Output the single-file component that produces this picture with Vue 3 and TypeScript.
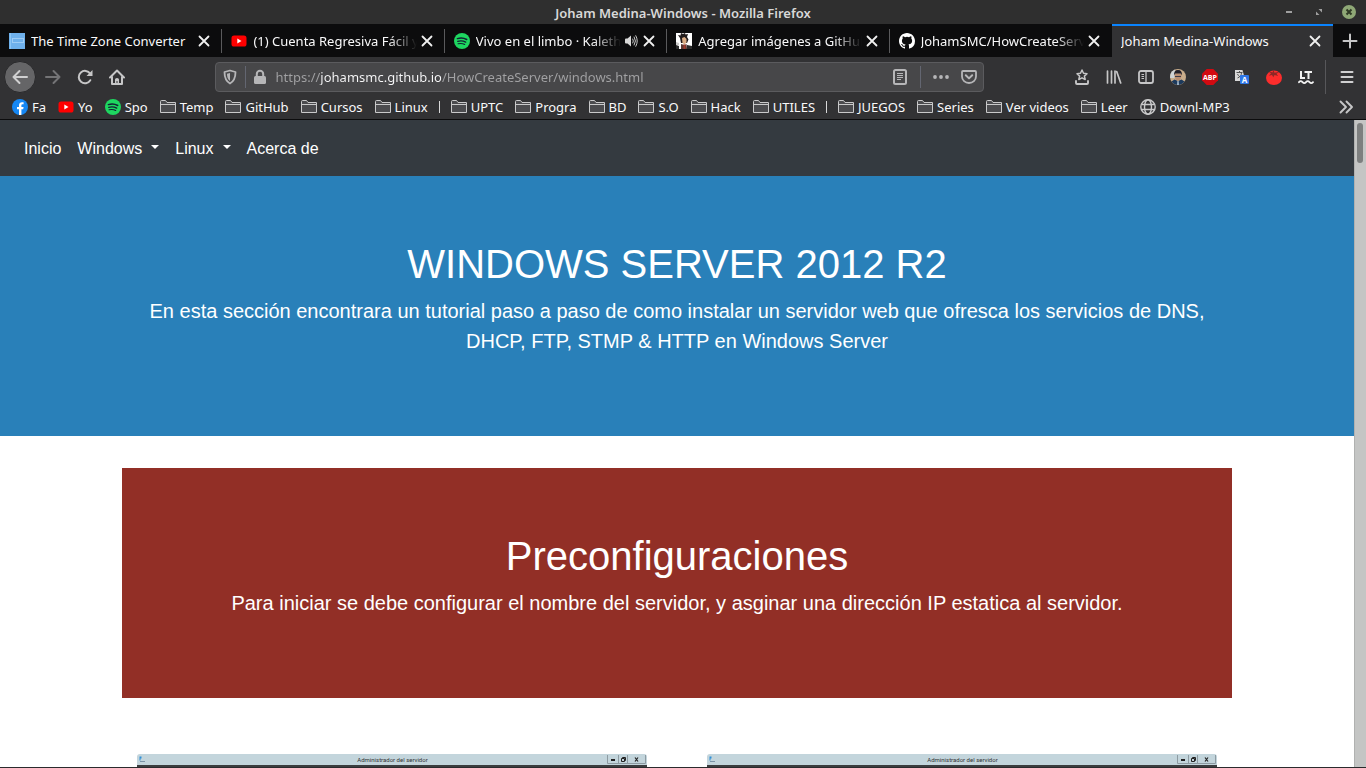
<script setup lang="ts">
import { ref } from 'vue'

interface Tab {
  title: string
  icon: string
  audio?: boolean
  active?: boolean
}

interface Bookmark {
  label: string
  icon: string
}

const tabs: Tab[] = [
  { title: 'The Time Zone Converter', icon: 'book' },
  { title: '(1) Cuenta Regresiva Fácil y', icon: 'youtube' },
  { title: 'Vivo en el limbo · Kaleth', icon: 'spotify', audio: true },
  { title: 'Agregar imágenes a GitHub', icon: 'anime' },
  { title: 'JohamSMC/HowCreateServer', icon: 'github' },
  { title: 'Joham Medina-Windows', icon: '', active: true },
]

const bookmarks: Bookmark[] = [
  { label: 'Fa', icon: 'facebook' },
  { label: 'Yo', icon: 'youtube' },
  { label: 'Spo', icon: 'spotify' },
  { label: 'Temp', icon: 'folder' },
  { label: 'GitHub', icon: 'folder' },
  { label: 'Cursos', icon: 'folder' },
  { label: 'Linux', icon: 'folder' },
  { label: '', icon: 'divider' },
  { label: 'UPTC', icon: 'folder' },
  { label: 'Progra', icon: 'folder' },
  { label: 'BD', icon: 'folder' },
  { label: 'S.O', icon: 'folder' },
  { label: 'Hack', icon: 'folder' },
  { label: 'UTILES', icon: 'folder' },
  { label: '', icon: 'divider' },
  { label: 'JUEGOS', icon: 'folder' },
  { label: 'Series', icon: 'folder' },
  { label: 'Ver videos', icon: 'folder' },
  { label: 'Leer', icon: 'folder' },
  { label: 'Downl-MP3', icon: 'globe' },
]

const extensions: { id: string; label: string }[] = [
  { id: 'star', label: 'Marcadores' },
  { id: 'library', label: 'Biblioteca' },
  { id: 'sidebar', label: 'Barra lateral' },
  { id: 'avatar', label: 'Cuenta' },
  { id: 'abp', label: 'Adblock Plus' },
  { id: 'translate', label: 'Traductor' },
  { id: 'tomato', label: 'Tomato Clock' },
  { id: 'lt', label: 'LanguageTool' },
]

const address = ref('https://johamsmc.github.io/HowCreateServer/windows.html')
const shots: number[] = [1, 2]
</script>

<template>
  <div class="window">
    <svg class="defs" width="0" height="0" aria-hidden="true">
      <symbol id="i-book" viewBox="0 0 16 16">
        <rect width="16" height="16" fill="#6fb1ec" />
        <path d="M1.500 0v16" stroke="#8cc6f6" />
        <rect x="3.500" y="5.500" width="11" height="4" fill="none" stroke="#9fcdf5" />
      </symbol>
      <symbol id="i-youtube" viewBox="0 0 16 16">
        <rect x="0.500" y="2.500" width="15" height="11" rx="2.600" fill="#f00" />
        <path d="M6.300 5.600v4.800L10.500 8z" fill="#fff" />
      </symbol>
      <symbol id="i-spotify" viewBox="0 0 16 16">
        <circle cx="8" cy="8" r="8" fill="#1ed760" />
        <g fill="none" stroke="#123" stroke-linecap="round">
          <path d="M3.400 5.600c3-.9 6.700-.6 9.300.9" stroke-width="1.500" />
          <path d="M3.700 8.300c2.700-.8 5.700-.5 8 .8" stroke-width="1.300" />
          <path d="M4.100 10.800c2.300-.6 4.700-.4 6.600.7" stroke-width="1.100" />
        </g>
      </symbol>
      <symbol id="i-anime" viewBox="0 0 16 16">
        <rect width="16" height="16" fill="#fff" />
        <path d="M0 12l3 1v3H0zM11 12l5 1v3h-5z" fill="#2b2b2b" />
        <path d="M0 9l3 1v2H0z" fill="#c9c9c9" />
        <path d="M4 5L2 2l2.500.5L5 0l2 1 2-1 .5 1.500L12 1l-1 3 1.500 2.500L11 10H5z" fill="#201a1a" />
        <path d="M6 5l2.500-1 2 2v3.500l-2 2-2-1.500z" fill="#dcae85" />
        <path d="M5 11l3.500 1 2-1 .5 5H5z" fill="#5b3a34" />
        <path d="M7.500 11.500h2V16h-2z" fill="#a33a2d" />
      </symbol>
      <symbol id="i-github" viewBox="0 0 16 16">
        <path fill="#fff" d="M8 0C3.580 0 0 3.580 0 8c0 3.540 2.290 6.530 5.470 7.590.4.070.55-.17.55-.38 0-.19-.01-.82-.01-1.490-2.010.37-2.530-.49-2.690-.94-.09-.23-.48-.94-.82-1.130-.28-.15-.68-.52-.01-.53.63-.01 1.080.58 1.230.82.72 1.210 1.870.87 2.330.66.07-.52.28-.87.51-1.070-1.780-.2-3.640-.89-3.640-3.950 0-.87.31-1.590.82-2.150-.08-.2-.36-1.020.08-2.120 0 0 .67-.21 2.200.82a7.600 7.600 0 0 1 4 0c1.530-1.040 2.200-.82 2.200-.82.44 1.100.16 1.920.08 2.120.51.56.82 1.270.82 2.150 0 3.070-1.870 3.750-3.650 3.950.29.25.54.73.54 1.480 0 1.070-.01 1.930-.01 2.200 0 .21.15.46.55.38A8 8 0 0 0 16 8c0-4.420-3.580-8-8-8z" />
      </symbol>
      <symbol id="i-facebook" viewBox="0 0 16 16">
        <circle cx="8" cy="8" r="8" fill="#1587f4" />
        <path d="M7 16v-5.700H5V8h2V6.300C7 4.200 8.200 3.200 10 3.200l1.600.1v2h-1C9.700 5.300 9.400 5.800 9.400 6.500V8h2.200l-.4 2.300H9.400V16z" fill="#fff" />
      </symbol>
      <symbol id="i-folder" viewBox="0 0 16 16">
        <path d="M.5 13.500v-11q0-1 1-1h4l1.500 2h8.500v10z" fill="#4b4b4e" stroke="#c9c9ca" />
        <path d="M.5 5.500h15" stroke="#c9c9ca" />
      </symbol>
      <symbol id="i-globe" viewBox="0 0 16 16">
        <g fill="none" stroke="#c9c9ca" stroke-width="1.400">
          <circle cx="8" cy="8" r="7.200" />
          <ellipse cx="8" cy="8" rx="3.500" ry="7.200" />
          <path d="M1.500 5.500h13M1.500 10.500h13" />
        </g>
      </symbol>
      <symbol id="i-back" viewBox="0 0 16 16">
        <path d="M15 8H1.500M7.500 2L1.500 8l6 6" fill="none" stroke="#d0d0d1" stroke-width="2" stroke-linecap="round" stroke-linejoin="round" />
      </symbol>
      <symbol id="i-forward" viewBox="0 0 16 16">
        <path d="M1 8h13.500M8.500 2l6 6-6 6" fill="none" stroke="#747476" stroke-width="2" stroke-linecap="round" stroke-linejoin="round" />
      </symbol>
      <symbol id="i-reload" viewBox="0 0 16 16">
        <path d="M13.200 4.700A6.200 6.200 0 1 0 13.300 11.200" fill="none" stroke="#c6c6c7" stroke-width="2" stroke-linecap="round" />
        <path d="M15.500 1v6h-6z" fill="#c6c6c7" />
      </symbol>
      <symbol id="i-home" viewBox="0 0 16 16">
        <path d="M1 8.500l7-7 7 7M3 7.500V15h10V7.500" fill="none" stroke="#c6c6c7" stroke-width="2" stroke-linecap="round" stroke-linejoin="round" />
        <path d="M6 15v-4.500q0-1.500 2-1.500t2 1.500V15H8.500v-3h-1v3z" fill="#c6c6c7" />
      </symbol>
      <symbol id="i-shield" viewBox="0 0 16 16">
        <path d="M8 1.500L13.500 3c0 5.500-1 9-5.500 11.500C3.500 12 2.500 8.500 2.500 3z" fill="none" stroke="#b6b6b8" stroke-width="1.800" stroke-linejoin="round" />
        <path d="M8 4v8C5.500 10 5 7.500 5 4.700z" fill="#b6b6b8" />
      </symbol>
      <symbol id="i-lock" viewBox="0 0 16 16">
        <path d="M4.800 7.500V5a3.200 3.200 0 0 1 6.400 0v2.500" fill="none" stroke="#b6b6b8" stroke-width="2" />
        <rect x="2" y="7" width="12" height="8" rx="1.500" fill="#b6b6b8" />
      </symbol>
      <symbol id="i-reader" viewBox="0 0 16 16">
        <rect x="2" y="1" width="12" height="14" rx="1.500" fill="none" stroke="#b6b6b8" stroke-width="2" />
        <path d="M5 4.500h6M5 6.500h6M5 8.500h6M5 10.500h4" stroke="#b6b6b8" />
      </symbol>
      <symbol id="i-dots" viewBox="0 0 16 16">
        <g fill="#b6b6b8">
          <circle cx="2" cy="8" r="1.900" />
          <circle cx="8" cy="8" r="1.900" />
          <circle cx="14" cy="8" r="1.900" />
        </g>
      </symbol>
      <symbol id="i-pocket" viewBox="0 0 16 16">
        <path d="M2 2h12q1 0 1 1v4.500a7 6.500 0 0 1-14 0V3q0-1 1-1z" fill="none" stroke="#b6b6b8" stroke-width="1.800" />
        <path d="M4.800 6.300L8 9.400l3.200-3.100" fill="none" stroke="#b6b6b8" stroke-width="2" stroke-linecap="round" stroke-linejoin="round" />
      </symbol>
      <symbol id="i-star" viewBox="0 0 16 16">
        <path d="M8 1l1.500 3.300 3.500.4-2.600 2.400.8 3.400L8 8.800l-3.200 1.700.8-3.400L3 4.700l3.500-.4z" fill="none" stroke="#c6c6c7" stroke-width="1.500" stroke-linejoin="round" />
        <path d="M2 12v2q0 1 1 1h10q1 0 1-1v-2" fill="none" stroke="#c6c6c7" stroke-width="1.900" stroke-linecap="round" />
      </symbol>
      <symbol id="i-library" viewBox="0 0 16 16">
        <path d="M1.500 2v12M5.500 2v12M9 2v12M10.700 2.500l4 11.500" fill="none" stroke="#c6c6c7" stroke-width="1.700" stroke-linecap="round" />
      </symbol>
      <symbol id="i-sidebar" viewBox="0 0 16 16">
        <rect x="1" y="2" width="14" height="12" rx="2" fill="none" stroke="#c6c6c7" stroke-width="1.800" />
        <path d="M8 2v12" stroke="#c6c6c7" stroke-width="1.300" />
        <path d="M3.500 5.500H6M3.500 7.500H6M3.500 9.500H6" stroke="#c6c6c7" />
      </symbol>
      <symbol id="i-avatar" viewBox="0 0 16 16">
        <circle cx="8" cy="8" r="8" fill="#c9ad8b" />
        <path d="M.3 6A8 8 0 0 1 5 .6L4.500 9 .1 9z" fill="#cfd3d6" />
        <path d="M1.500 12.500L4.500 10.500 8 12l3.500-1.500 3 2A8 8 0 0 1 1.500 12.500z" fill="#1d3a5c" />
        <path d="M4.800 4.500h6.400V8Q10.500 11.500 8 11.500T4.800 8z" fill="#b98e72" />
        <path d="M4.200 6.500Q3.500 1 8 1t3.800 5.500L10.800 4.500H5.200z" fill="#1f1e29" />
        <path d="M5 7h6v1H5z" fill="#3b3b48" />
        <path d="M7.300 12h1.400l.3 4H7z" fill="#9db2c6" />
      </symbol>
      <symbol id="i-tomato" viewBox="0 0 16 16">
        <ellipse cx="8" cy="8.800" rx="8" ry="7.200" fill="#fc2d2c" />
        <path d="M8.500 3.800L7.400.8l-.9.5.6 2L3 3l2 1.500L2.800 6.800 6 6l1.300 2.200L8.500 6l3.700 1-1.700-2.200L13.500 2.800z" fill="#8c2826" />
      </symbol>
      <symbol id="i-lt" viewBox="0 0 16 16">
        <path d="M3 2v7h4M6.500 3H14M10.500 3v7" fill="none" stroke="#f2f2f2" stroke-width="2" />
        <path d="M1 13.200q1.700-2 3.500 0t3.500 0 3.500 0 3.500 0" fill="none" stroke="#f2f2f2" stroke-width="1.800" stroke-linecap="round" />
      </symbol>
      <symbol id="i-menu" viewBox="0 0 16 16">
        <path d="M2.500 3h11M2.500 8h11M2.500 13h11" stroke="#d0d0d1" stroke-width="2" stroke-linecap="round" />
      </symbol>
      <symbol id="i-close" viewBox="0 0 16 16">
        <path d="M3.500 3.500l9 9M12.500 3.500l-9 9" stroke="#f0f0f0" stroke-width="1.800" stroke-linecap="round" />
      </symbol>
      <symbol id="i-plus" viewBox="0 0 16 16">
        <path d="M8 1.500v13M1.500 8h13" stroke="#c6c6c7" stroke-width="2" stroke-linecap="round" />
      </symbol>
      <symbol id="i-audio" viewBox="0 0 16 16">
        <path d="M2 6.500q0-1 1-1h1.500L8 2.500v11l-3.500-3H3q-1 0-1-1z" fill="#d8d8d8" />
        <path d="M9.800 6q1.200 2 0 4M11.200 4q2.600 4 0 8M12.800 2.700q3 5.300 0 10.600" fill="none" stroke="#c8c8c8" stroke-linecap="round" />
      </symbol>
      <symbol id="i-chevrons" viewBox="0 0 16 16">
        <path d="M2.500 2.500L8 8l-5.500 5.500M8.500 2.500L14 8l-5.500 5.500" fill="none" stroke="#c6c6c7" stroke-width="1.900" stroke-linecap="round" stroke-linejoin="round" />
      </symbol>
      <symbol id="i-minimize" viewBox="0 0 16 16">
        <path d="M5 8h6" stroke="#a0a0a0" stroke-width="2" />
      </symbol>
      <symbol id="i-maximize" viewBox="0 0 16 16">
        <path d="M7.500 5H11v3.500zM5 7.500V11h3.500z" fill="#a0a0a0" />
      </symbol>
      <symbol id="i-quit" viewBox="0 0 16 16">
        <circle cx="8" cy="8" r="7" fill="#8fa876" />
        <path d="M5.500 5.500l5 5M10.500 5.500l-5 5" stroke="#2f3a25" stroke-width="2" />
      </symbol>
    </svg>

    <header class="titlebar">
      <span class="window-title">Joham Medina-Windows - Mozilla Firefox</span>
      <div class="window-controls">
        <button type="button" aria-label="Minimizar"><svg class="icon"><use href="#i-minimize" /></svg></button>
        <button type="button" aria-label="Maximizar"><svg class="icon"><use href="#i-maximize" /></svg></button>
        <button type="button" aria-label="Cerrar"><svg class="icon"><use href="#i-quit" /></svg></button>
      </div>
    </header>

    <div class="tabstrip">
      <div v-for="tab in tabs" :key="tab.title" class="tab" :class="{ active: tab.active }">
        <svg v-if="tab.icon" class="icon"><use :href="'#i-' + tab.icon" /></svg>
        <span class="tab-title" :class="{ faded: tab.icon && tab.icon !== 'book' }">{{ tab.title }}</span>
        <svg v-if="tab.audio" class="icon audio"><use href="#i-audio" /></svg>
        <button type="button" class="tab-close" aria-label="Cerrar pestaña"><svg class="icon"><use href="#i-close" /></svg></button>
      </div>
      <button type="button" class="new-tab" aria-label="Nueva pestaña"><svg class="icon"><use href="#i-plus" /></svg></button>
    </div>

    <div class="toolbar">
      <button type="button" class="tool back" aria-label="Atrás"><svg class="icon"><use href="#i-back" /></svg></button>
      <button type="button" class="tool" aria-label="Adelante"><svg class="icon"><use href="#i-forward" /></svg></button>
      <button type="button" class="tool" aria-label="Recargar"><svg class="icon"><use href="#i-reload" /></svg></button>
      <button type="button" class="tool" aria-label="Inicio"><svg class="icon"><use href="#i-home" /></svg></button>
      <div class="urlbar">
        <svg class="icon"><use href="#i-shield" /></svg>
        <span class="url-divider"></span>
        <svg class="icon"><use href="#i-lock" /></svg>
        <input v-model="address" class="url-input" type="text" aria-label="Dirección" spellcheck="false" />
        <button type="button" class="url-button" aria-label="Vista de lectura"><svg class="icon"><use href="#i-reader" /></svg></button>
        <span class="url-divider wide"></span>
        <button type="button" class="url-button" aria-label="Acciones"><svg class="icon"><use href="#i-dots" /></svg></button>
        <button type="button" class="url-button pocket" aria-label="Pocket"><svg class="icon"><use href="#i-pocket" /></svg></button>
      </div>
      <button v-for="ext in extensions" :key="ext.id" type="button" class="tool" :aria-label="ext.label">
        <svg v-if="ext.id === 'abp'" class="icon" viewBox="0 0 16 16">
          <path d="M4.700 0h6.600L16 4.700v6.600L11.300 16H4.700L0 11.300V4.700z" fill="#d20a11" />
          <text class="badge-text" x="8" y="11" text-anchor="middle" font-size="7" fill="#fff">ABP</text>
        </svg>
        <svg v-else-if="ext.id === 'translate'" class="icon" viewBox="0 0 16 16">
          <path d="M1 1h7.500l3 11H1z" fill="#d8d8d8" />
          <path d="M2.500 3.500h6M5.500 2v1.500M3.500 9C6.500 8 7.500 6 7.500 3.500M3.500 5c1 2 2 3 4 3.500" stroke="#555" fill="none" />
          <rect x="6" y="6" width="9" height="9" rx="1" fill="#2d76e8" />
          <text class="badge-text" x="10.500" y="13.500" text-anchor="middle" font-size="8" fill="#fff">A</text>
        </svg>
        <svg v-else class="icon"><use :href="'#i-' + ext.id" /></svg>
      </button>
      <span class="tool-divider"></span>
      <button type="button" class="tool" aria-label="Menú"><svg class="icon"><use href="#i-menu" /></svg></button>
    </div>

    <nav class="bookmarks" aria-label="Marcadores">
      <template v-for="(mark, index) in bookmarks" :key="index">
        <span v-if="mark.icon === 'divider'" class="mark-divider"></span>
        <a v-else href="#" class="mark">
          <svg class="icon"><use :href="'#i-' + mark.icon" /></svg>
          <span>{{ mark.label }}</span>
        </a>
      </template>
      <button type="button" class="more" aria-label="Más marcadores"><svg class="icon"><use href="#i-chevrons" /></svg></button>
    </nav>

    <div class="viewport">
      <main class="page">
        <nav class="site-nav" aria-label="Principal">
          <a href="#">Inicio</a>
          <a href="#">Windows<span class="caret"></span></a>
          <a href="#">Linux<span class="caret"></span></a>
          <a href="#">Acerca de</a>
        </nav>
        <section class="hero">
          <div class="container">
            <h1>WINDOWS SERVER 2012 R2</h1>
            <p>En esta sección encontrara un tutorial paso a paso de como instalar un servidor web que ofresca los servicios de DNS, DHCP, FTP, STMP &amp; HTTP en Windows Server</p>
          </div>
        </section>
        <div class="container">
          <section class="hero setup">
            <h2>Preconfiguraciones</h2>
            <p>Para iniciar se debe configurar el nombre del servidor, y asginar una dirección IP estatica al servidor.</p>
          </section>
          <div class="shots">
            <figure v-for="shot in shots" :key="shot" class="shot">
              <div class="shot-bar">
                <svg class="shot-icon" viewBox="0 0 6 7">
                  <path d="M0.500 0.500h2v2h-1v2h-1z" fill="#2d8fd8" />
                  <path d="M1 5.500h5" stroke="#7b93a5" />
                </svg>
                <span class="shot-title">Administrador del servidor</span>
                <svg class="shot-controls" viewBox="0 0 39 9">
                  <path d="M.5 0v8.500h38V0M11.500 0v8.500M20.500 0v8.500" fill="none" stroke="#8d9ba2" />
                  <path d="M4 5h4" stroke="#222" stroke-width="2" />
                  <path d="M14.500 3.500h3v3h-3zM15.500 3V2.500h3v3H18" fill="none" stroke="#222" />
                  <path d="M28 2.500l3 4M31 2.500l-3 4" stroke="#222" stroke-width="1.200" />
                </svg>
              </div>
              <div class="shot-body"></div>
            </figure>
          </div>
        </div>
      </main>
      <div class="scrollbar"><div class="thumb"></div></div>
    </div>
  </div>
</template>

<style>
html,
body {
  margin: 0;
  overflow: hidden;
}
</style>

<style scoped>
* {
  box-sizing: border-box;
}

.window {
  display: flex;
  flex-direction: column;
  height: 100vh;
  overflow: hidden;
  border-bottom: 1px solid #2b2b2d;
  background: #323234;
  color: #f9f9fa;
  font-family: "Noto Sans", sans-serif;
  font-size: 13px;
}

.defs {
  position: absolute;
}

button {
  display: flex;
  align-items: center;
  justify-content: center;
  margin: 0;
  padding: 0;
  border: 0;
  background: none;
}

a {
  color: inherit;
  text-decoration: none;
}

.icon {
  display: block;
  flex: none;
  width: 16px;
  height: 16px;
}

.badge-text {
  font-family: "Open Sans", sans-serif;
  font-weight: 700;
}

.titlebar {
  display: grid;
  grid-template-columns: 1fr auto 1fr;
  align-items: center;
  flex: none;
  height: 24px;
  background: #2f2f2f;
}

.window-title {
  grid-column: 2;
  padding-top: 2px;
  color: #d8d8d8;
  font-size: 13px;
  font-weight: 600;
}

.window-controls {
  display: flex;
  justify-content: flex-end;
  gap: 14px;
  padding-right: 9px;
}

.tabstrip {
  display: flex;
  flex: none;
  height: 33px;
  background: #0c0c0d;
}

.tab {
  display: flex;
  flex: 1 1 0;
  align-items: center;
  gap: 6px;
  min-width: 0;
  padding: 1px 10px 0 9px;
  background: linear-gradient(#5a5a5c, #5a5a5c) right 5px / 1px 24px no-repeat;
}

.tab:nth-child(5) {
  background: none;
}

.tab.active {
  flex: 0 1 221px;
  border-top: 2px solid #0a84ff;
  padding-top: 0;
  padding-bottom: 1px;
  background: #323234;
}

.tab-title {
  flex: 1;
  overflow: hidden;
  white-space: nowrap;
}

.tab-title.faded {
  mask-image: linear-gradient(to left, transparent, #000 28px);
}

.audio {
  margin-left: -4px;
}

.tab-close {
  margin-left: -4px;
}

.new-tab {
  flex: none;
  width: 33px;
}

.toolbar {
  display: flex;
  align-items: center;
  flex: none;
  height: 39px;
  padding: 0 3px 0 4px;
}

.tool {
  flex: none;
  width: 32px;
  height: 32px;
}

.back {
  margin-right: 1px;
  border: 1px solid #29292b;
  border-radius: 50%;
  background: #656567;
}

.urlbar {
  display: flex;
  align-items: center;
  flex: 1;
  min-width: 0;
  height: 30px;
  margin: 0 6%;
  padding: 0 6px;
  border: 1px solid #5b5b5e;
  border-radius: 4px;
  background: #474749;
}

.url-divider {
  flex: none;
  width: 1px;
  height: 22px;
  margin: 0 6px 0 7px;
  background: #636671;
}

.url-divider.wide {
  margin: 0 12px;
}

.url-input {
  flex: 1;
  min-width: 0;
  height: 28px;
  margin: 0 0 0 8px;
  padding: 0;
  border: 0;
  outline: 0;
  background: linear-gradient(to right, #a2a2a4 45px, #f9f9fa 45px, #f9f9fa 165px, #a2a2a4 165px);
  background-clip: text;
  color: transparent;
  font: inherit;
}

.url-button {
  flex: none;
}

.pocket {
  margin-left: 12px;
}

.tool-divider {
  flex: none;
  width: 1px;
  height: 34px;
  margin: 0 5px 0 3px;
  background: #57575a;
}

.bookmarks {
  display: flex;
  align-items: center;
  gap: 12px;
  flex: none;
  height: 24px;
  padding: 0 12px 2px;
  border-bottom: 1px solid #0c0c0d;
}

.mark {
  display: flex;
  align-items: center;
  gap: 4px;
  white-space: nowrap;
}

.mark-divider {
  width: 1px;
  height: 12px;
  margin: 0 -1px;
  background: #d8d8d9;
}

.more {
  margin-left: auto;
}

.viewport {
  display: flex;
  flex: 1;
  min-height: 0;
}

.page {
  flex: 1;
  min-width: 0;
  overflow: hidden;
  background: #fff;
  color: #fff;
  font-family: "Liberation Sans", Arial, sans-serif;
}

.scrollbar {
  flex: none;
  width: 12px;
  padding: 3px 3px 0 2px;
  border-left: 1px solid #b0b1b0;
  background: #c4c5c4;
}

.thumb {
  width: 6px;
  height: 40px;
  border-radius: 3px;
  background: #7d7f7f;
}

.site-nav {
  display: flex;
  padding: 9px 16px 7px;
  background: #343a40;
  font-size: 16px;
  line-height: 24px;
}

.site-nav a {
  padding: 8px;
}

.caret {
  display: inline-block;
  margin-left: 9px;
  border-top: 4px solid #fff;
  border-right: 4px solid transparent;
  border-left: 4px solid transparent;
  vertical-align: 5px;
}

.container {
  max-width: 1140px;
  margin: 0 auto;
  padding: 0 15px;
}

.hero {
  padding: 64px 0;
  background: #2980b9;
  text-align: center;
}

.hero h1,
.hero h2 {
  margin: 0 0 8px;
  font-size: 40px;
  font-weight: 400;
  line-height: 48px;
}

.hero p {
  margin: 0 0 16px;
  font-size: 20px;
  line-height: 30px;
}

.setup {
  margin: 32px 0 56px;
  background: #922f26;
}

.shots {
  display: flex;
  gap: 60px;
  padding: 0 15px;
}

.shot {
  flex: 1;
  margin: 0;
  overflow: hidden;
  border-radius: 3px 3px 0 0;
  color: #333;
}

.shot-bar {
  display: grid;
  grid-template-columns: 1fr auto 1fr;
  align-items: center;
  height: 11px;
  padding: 0 1px 0 2px;
  background: #c3d5dc;
  font-family: Roboto, sans-serif;
  font-size: 6px;
  line-height: 10px;
}

.shot-icon {
  width: 6px;
  height: 7px;
}

.shot-controls {
  justify-self: end;
  width: 39px;
  height: 9px;
}

.shot-body {
  height: 290px;
  background: #3b3d3e;
}
</style>
